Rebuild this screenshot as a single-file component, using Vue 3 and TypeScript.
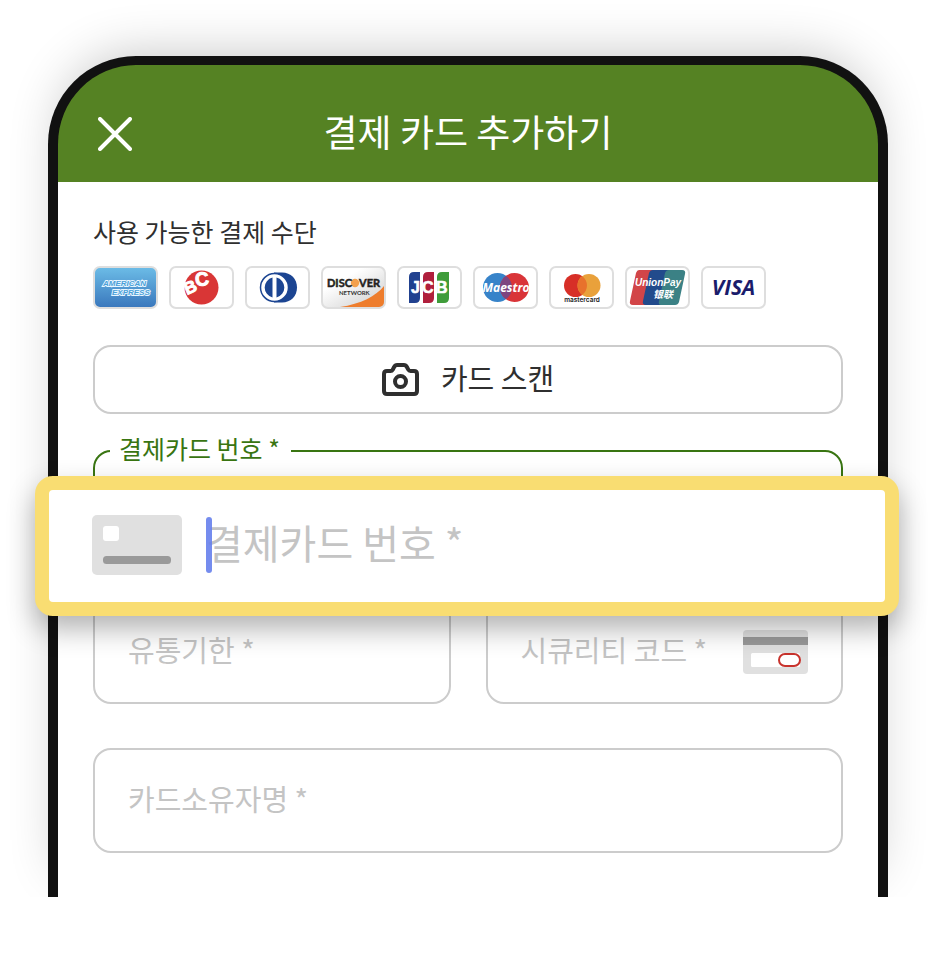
<script setup lang="ts">
import { ref } from 'vue'

type Brand =
  | 'amex' | 'bc' | 'diners' | 'discover' | 'jcb'
  | 'maestro' | 'mastercard' | 'unionpay' | 'visa'

const brands: { id: Brand; name: string }[] = [
  { id: 'amex', name: 'American Express' },
  { id: 'bc', name: 'BC' },
  { id: 'diners', name: 'Diners Club' },
  { id: 'discover', name: 'Discover' },
  { id: 'jcb', name: 'JCB' },
  { id: 'maestro', name: 'Maestro' },
  { id: 'mastercard', name: 'Mastercard' },
  { id: 'unionpay', name: 'UnionPay' },
  { id: 'visa', name: 'Visa' },
]

const cardNumber = ref('')
const expiry = ref('')
const securityCode = ref('')
const owner = ref('')
</script>

<template>
  <div class="stage">
    <div class="phone">
      <header class="topbar">
        <button class="close" type="button" aria-label="닫기">
          <svg viewBox="0 0 34 34" width="34" height="34" aria-hidden="true">
            <path d="M2 2 32 32M32 2 2 32" stroke="#fff" stroke-width="4" stroke-linecap="round" />
          </svg>
        </button>
        <h1>결제 카드 추가하기</h1>
      </header>

      <main class="content">
        <p class="caption">사용 가능한 결제 수단</p>
        <ul class="brands">
          <li v-for="b in brands" :key="b.id" :class="['brand', b.id]" :aria-label="b.name">
            <svg viewBox="0 0 61 39" aria-hidden="true">
              <g v-if="b.id === 'amex'" font-family="Liberation Sans" font-style="italic" font-weight="700" font-size="8" fill="#4aa0d8" stroke="#e8f6ff" stroke-width="1.8" paint-order="stroke">
                <text x="8" y="18">AMERICAN</text>
                <text x="17" y="27">EXPRESS</text>
              </g>
              <g v-else-if="b.id === 'bc'">
                <circle cx="30.500" cy="19.500" r="17" fill="#d93636" />
                <g fill="#fff" stroke="#fff" stroke-width="1" font-family="Liberation Sans" font-weight="700">
                  <text transform="translate(16 27) rotate(-24)" font-size="17">B</text>
                  <text transform="translate(25 18.500) rotate(-8)" font-size="19">C</text>
                </g>
              </g>
              <g v-else-if="b.id === 'diners'">
                <path d="M27 4.500h8c9 0 15 6.500 15 15S44 34.500 35 34.500h-8z" fill="#1c4592" />
                <circle cx="27.500" cy="19.500" r="14" fill="#fff" stroke="#1c4592" stroke-width="1.500" />
                <path d="M25.500 9.500a10.300 10.300 0 0 0 0 20zM29.500 9.500a10.300 10.300 0 0 1 0 20z" fill="#1c4592" />
              </g>
              <g v-else-if="b.id === 'discover'" font-family="Lato" font-weight="700">
                <path d="M17 39C38 36 53 28 61 18v21z" fill="#ee7d2d" />
                <circle cx="32" cy="15" r="4.200" fill="#f3a04c" />
                <g font-size="11" fill="#231f20" stroke="#231f20" stroke-width=".5">
                  <text x="4" y="19">DISC</text>
                  <text x="36" y="19">VER</text>
                </g>
                <text x="16" y="26.500" font-size="6" fill="#333">NETWORK</text>
              </g>
              <g v-else-if="b.id === 'jcb'">
                <path d="M10 9q0-5 5-5h6v26q0 5-5 5h-6z" fill="#21418f" />
                <path d="M24 9q0-5 5-5h6v26q0 5-5 5h-6z" fill="#b01f3d" />
                <path d="M38 9q0-5 5-5h7v26q0 5-5 5h-7z" fill="#3f9c3a" />
                <g fill="#fff" stroke="#fff" stroke-width=".6" font-family="Liberation Sans" font-weight="700" font-size="16">
                  <text x="12" y="25">J</text>
                  <text x="23" y="25">C</text>
                  <text x="37" y="25">B</text>
                </g>
              </g>
              <g v-else-if="b.id === 'maestro'">
                <circle cx="22.500" cy="19.500" r="14.500" fill="#3783c9" />
                <circle cx="39.500" cy="19.500" r="14.500" fill="#d93438" />
                <path d="M31 7.750a14.500 14.500 0 0 1 0 23.500a14.500 14.500 0 0 1 0-23.500" fill="#7d4580" />
                <text x="31" y="23.500" text-anchor="middle" font-family="Open Sans" font-style="italic" font-weight="700" font-size="12" fill="#fff">Maestro</text>
              </g>
              <g v-else-if="b.id === 'mastercard'">
                <circle cx="24.500" cy="17.500" r="11.500" fill="#d72f27" />
                <circle cx="38" cy="17.500" r="11.500" fill="#e9a13b" />
                <path d="M31.250 8.200a11.500 11.500 0 0 1 0 18.600a11.500 11.500 0 0 1 0-18.600" fill="#e8722c" />
                <text x="31" y="34" text-anchor="middle" font-family="Inter" font-weight="600" font-size="6.500" fill="#222">mastercard</text>
              </g>
              <g v-else-if="b.id === 'unionpay'">
                <path d="M12 2h17l-8 35H6q-4 0-3-4L9 5q1-3 3-3z" fill="#d24548" />
                <path d="M26 2h17l-8 35H19q-4 0-3-4l6-28q1-3 4-3z" fill="#224b8c" />
                <path d="M42 2h13q4 0 3 4l-6 28q-1 3-4 3H34q-3 0-2-4l6-28q1-3 4-3z" fill="#3b8185" />
                <text x="31" y="18" text-anchor="middle" font-family="Liberation Sans" font-style="italic" font-weight="700" font-size="10" fill="#fff">UnionPay</text>
                <text x="26" y="30" font-family="Noto Sans CJK SC" font-style="italic" font-weight="700" font-size="10" fill="#fff">银联</text>
              </g>
              <g v-else>
                <text x="30.500" y="27" text-anchor="middle" font-family="Open Sans" font-style="italic" font-weight="700" font-size="21" fill="#1a1c6b">VISA</text>
              </g>
            </svg>
          </li>
        </ul>

        <button class="scan" type="button">
          <svg viewBox="0 0 37 33" width="37" height="33" fill="none" stroke="#2f2f2f" stroke-width="4" stroke-linejoin="round" aria-hidden="true">
            <path d="M5 8h3.500q1.500 0 2.200-1.300l1.400-2.700q1-2 3-2h6.800q2 0 3 2l1.400 2.700Q27 8 28.500 8H32q3 0 3 3v17q0 3-3 3H5q-3 0-3-3V11q0-3 3-3z" />
            <circle cx="18.500" cy="18.500" r="5.500" />
          </svg>
          <span>카드 스캔</span>
        </button>

        <div class="number">
          <fieldset class="outline">
            <legend><label for="card-number">결제카드 번호 *</label></legend>
          </fieldset>
          <div class="callout">
            <svg viewBox="0 0 90 60" width="90" height="60" aria-hidden="true">
              <rect width="90" height="60" rx="5" fill="#e0e0e0" />
              <rect x="11" y="11" width="16" height="15" rx="3" fill="#fff" />
              <rect x="11" y="41" width="68" height="8" rx="3.500" fill="#9a9a9a" />
            </svg>
            <div class="entry">
              <input id="card-number" v-model="cardNumber" type="text" inputmode="numeric" placeholder="결제카드 번호 *" />
              <span class="caret"></span>
            </div>
          </div>
        </div>

        <div class="pair">
          <div class="field">
            <input v-model="expiry" type="text" aria-label="유통기한" placeholder="유통기한 *" />
          </div>
          <div class="field">
            <input v-model="securityCode" type="text" aria-label="시큐리티 코드" placeholder="시큐리티 코드 *" />
            <svg viewBox="0 0 65 44" width="65" height="44" aria-hidden="true">
              <rect width="65" height="44" rx="4" fill="#e0e0e0" />
              <rect y="7" width="65" height="8" fill="#999" />
              <rect x="8" y="23" width="49" height="14" rx="1.500" fill="#fff" />
              <rect x="36" y="24" width="21" height="12" rx="6" fill="#fff" stroke="#c8332d" stroke-width="2" />
            </svg>
          </div>
        </div>

        <div class="field">
          <input v-model="owner" type="text" aria-label="카드소유자명" placeholder="카드소유자명 *" />
        </div>
      </main>
    </div>
  </div>
</template>

<style>
body {
  background: #fff;
}
</style>

<style scoped>
.stage {
  box-sizing: border-box;
  padding: 56px 48px 0;
  overflow: hidden;
  font-family: 'Noto Sans CJK KR', 'Noto Sans', sans-serif;
  color: #2f2f2f;
}
.phone {
  border: solid #111;
  border-width: 9px 10px 0;
  border-radius: 88px 88px 0 0;
  background: #111;
  box-shadow: 0 -14px 52px -14px rgba(0, 0, 0, 0.24);
}
.topbar {
  display: grid;
  grid-template-columns: 34px 1fr 34px;
  align-items: center;
  padding: 32px 40px 12px;
  border-radius: 78px 78px 0 0 / 79px 79px 0 0;
  background: #558223;
  color: #fff;
}
.topbar h1 {
  margin: 0;
  padding-bottom: 4px;
  font-size: 37px;
  line-height: 69px;
  font-weight: 400;
  text-align: center;
}
button {
  font: inherit;
  color: inherit;
  cursor: pointer;
}
.close {
  display: block;
  padding: 0;
  border: 0;
  background: none;
}
svg {
  display: block;
  flex: none;
}
.content {
  padding: 32px 35px 44px;
  background: #fff;
}
.caption {
  margin: 0 0 18px;
  font-size: 25px;
  line-height: 34px;
}
.brands {
  display: flex;
  gap: 11px;
  margin: 0 0 36px;
  padding: 0;
  list-style: none;
}
.brand {
  box-sizing: border-box;
  width: 65px;
  height: 43px;
  border: 2px solid #dedede;
  border-radius: 7px;
  background: #fff;
  overflow: hidden;
}
.amex {
  background: linear-gradient(#6bbbe6, #3a78bd);
}
.discover {
  background: linear-gradient(150deg, #fff 30%, #ccc);
}
.scan {
  box-sizing: border-box;
  display: flex;
  align-items: center;
  justify-content: center;
  gap: 22px;
  width: 100%;
  height: 69px;
  margin-bottom: 36px;
  padding: 0;
  border: 2px solid #ccc;
  border-radius: 18px;
  background: #fff;
  font-size: 29px;
}
.scan span {
  padding-bottom: 6px;
}
.number {
  position: relative;
  height: 105px;
  margin-bottom: 44px;
}
.outline {
  position: absolute;
  inset: -17px 0 auto;
  box-sizing: border-box;
  height: 122px;
  margin: 0;
  padding: 0 15px;
  border: 2px solid #397512;
  border-radius: 18px;
}
.outline legend {
  padding: 0 11px 6px 9px;
  font-size: 25px;
  line-height: 30px;
  color: #397512;
}
.callout {
  position: absolute;
  top: 26px;
  left: -58px;
  right: -56px;
  box-sizing: border-box;
  display: flex;
  align-items: center;
  gap: 24px;
  height: 140px;
  padding: 0 43px 2px;
  border: 14px solid #f9dd72;
  border-radius: 18px;
  background: #fff;
  box-shadow: 0 13px 28px rgba(0, 0, 0, 0.3);
}
.entry {
  position: relative;
  flex: 1;
  display: flex;
}
.caret {
  position: absolute;
  top: 2px;
  left: 0;
  width: 6px;
  height: 56px;
  border-radius: 3px;
  background: #6680ec;
  opacity: 0.9;
}
input {
  flex: 1;
  box-sizing: border-box;
  min-width: 0;
  width: 100%;
  padding: 0 0 6px;
  border: 0;
  outline: 0;
  background: none;
  font: inherit;
  font-size: 29px;
  color: inherit;
}
input::placeholder {
  color: #c4c4c4;
  opacity: 1;
}
.entry input {
  height: 60px;
  font-size: 40px;
}
.pair {
  display: grid;
  grid-template-columns: 1fr 1fr;
  gap: 35px;
  margin-bottom: 44px;
}
.field {
  box-sizing: border-box;
  display: flex;
  align-items: center;
  height: 105px;
  padding: 0 33px;
  border: 2px solid #ccc;
  border-radius: 18px;
}
</style>
